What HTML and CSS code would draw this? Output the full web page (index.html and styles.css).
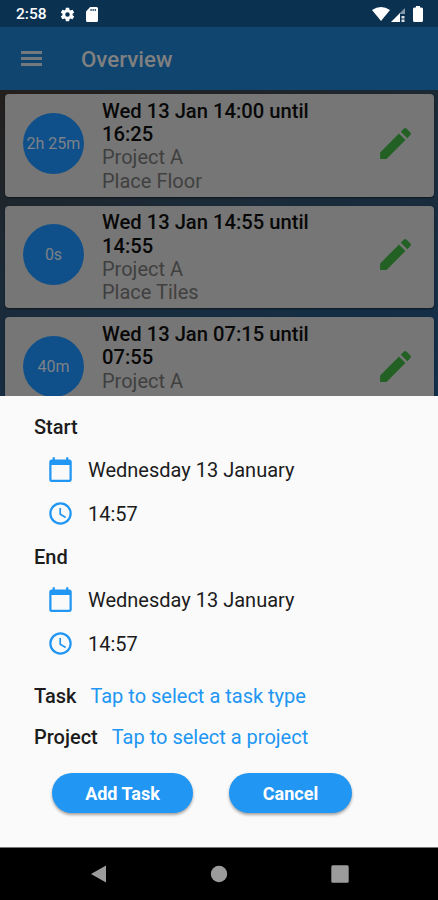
FILE: index.html
```
<!DOCTYPE html>
<html lang="en">
<head>
    <meta charset="UTF-8">
    <meta name="viewport" content="width=device-width, initial-scale=1.0">
    <title>Overview</title>
    <link rel="stylesheet" href="styles.css">
</head>
<body>

    <div class="status-bar">
        <span class="clock">2:58</span>
        <svg class="gear-icon" viewBox="0 0 24 24"><path d="M19.14 12.94c.04-.3.06-.61.06-.94 0-.32-.02-.64-.07-.94l2.03-1.58a.49.49 0 0 0 .12-.61l-1.92-3.32a.49.49 0 0 0-.59-.22l-2.39.96c-.5-.38-1.03-.7-1.62-.94l-.36-2.54a.48.48 0 0 0-.48-.41h-3.84c-.24 0-.43.17-.47.41l-.36 2.54c-.59.24-1.13.57-1.62.94l-2.39-.96a.48.48 0 0 0-.59.22L2.74 8.87c-.12.21-.08.47.12.61l2.03 1.58c-.05.3-.09.63-.09.94s.02.64.07.94l-2.03 1.58a.49.49 0 0 0-.12.61l1.92 3.32c.12.22.37.29.59.22l2.39-.96c.5.38 1.03.7 1.62.94l.36 2.54c.05.24.24.41.48.41h3.84c.24 0 .44-.17.47-.41l.36-2.54c.59-.24 1.13-.56 1.62-.94l2.39.96c.22.08.47 0 .59-.22l1.92-3.32a.48.48 0 0 0-.12-.61zM12 15.2A3.200 3.200 0 1 1 12 8.800a3.200 3.200 0 0 1 0 6.400z"/></svg>
        <svg class="sd-icon" viewBox="0 0 12 15"><path fill-rule="evenodd" d="M4.2 0H10.500a1.500 1.500 0 0 1 1.500 1.500V13.500a1.500 1.500 0 0 1-1.500 1.500H1.500A1.500 1.500 0 0 1 0 13.500V4.500zM4.500 2V4h1.100V2zM6.600 2V4h1.100V2zM8.700 2V4h1.100V2z"/></svg>
        <div class="status-right">
            <svg class="wifi-icon" viewBox="0 0 18 14"><path d="M0 3Q9-3 18 3L9 14z"/></svg>
            <svg class="signal-icon" viewBox="0 0 14 14"><path opacity=".5" d="M8 6L14 0V6z"/><path d="M0 14L9 5V14z"/><path d="M10.500 8h3v2.500h-3zM10.500 11.500h3V14h-3z" opacity=".85"/></svg>
            <svg class="battery-icon" viewBox="0 0 10 16"><path d="M3 0h4v1.500h1.500A1.500 1.500 0 0 1 10 3V14.500A1.500 1.500 0 0 1 8.500 16h-7A1.500 1.500 0 0 1 0 14.500V3a1.500 1.500 0 0 1 1.500-1.500H3z"/></svg>
        </div>
    </div>

    <div class="app-bar">
        <div class="menu-icon"><span></span><span></span><span></span></div>
        <h1>Overview</h1>
    </div>

    <div class="task-list">
        <div class="card">
            <div class="duration">2h 25m</div>
            <div class="card-text">
                <b>Wed 13 Jan 14:00 until<br>16:25</b>
                <span>Project A</span>
                <span>Place Floor</span>
            </div>
            <svg class="edit-icon" viewBox="0 0 24 24"><path d="M3 17.250V21h3.750L17.810 9.940l-3.750-3.750zM20.710 7.040a1 1 0 0 0 0-1.410l-2.340-2.340a1 1 0 0 0-1.410 0l-1.830 1.830 3.750 3.750z"/></svg>
        </div>
        <div class="card">
            <div class="duration">0s</div>
            <div class="card-text">
                <b>Wed 13 Jan 14:55 until<br>14:55</b>
                <span>Project A</span>
                <span>Place Tiles</span>
            </div>
            <svg class="edit-icon" viewBox="0 0 24 24"><path d="M3 17.250V21h3.750L17.810 9.940l-3.750-3.750zM20.710 7.040a1 1 0 0 0 0-1.410l-2.340-2.340a1 1 0 0 0-1.410 0l-1.830 1.830 3.750 3.750z"/></svg>
        </div>
        <div class="card">
            <div class="duration">40m</div>
            <div class="card-text">
                <b>Wed 13 Jan 07:15 until<br>07:55</b>
                <span>Project A</span>
            </div>
            <svg class="edit-icon" viewBox="0 0 24 24"><path d="M3 17.250V21h3.750L17.810 9.940l-3.750-3.750zM20.710 7.040a1 1 0 0 0 0-1.410l-2.340-2.340a1 1 0 0 0-1.410 0l-1.830 1.830 3.750 3.750z"/></svg>
        </div>
    </div>

    <div class="sheet">
        <h2>Start</h2>
        <div class="field">
            <svg viewBox="0 0 24 24"><path d="M20 3h-1V1h-2v2H7V1H5v2H4c-1.100 0-2 .9-2 2v16c0 1.100.9 2 2 2h16c1.100 0 2-.9 2-2V5c0-1.100-.9-2-2-2zm0 18H4V8h16z"/></svg>
            <span>Wednesday 13 January</span>
        </div>
        <div class="field">
            <svg viewBox="0 0 24 24"><path d="M11.990 2C6.470 2 2 6.480 2 12s4.470 10 9.990 10C17.520 22 22 17.520 22 12S17.520 2 11.990 2zM12 20a8 8 0 1 1 0-16 8 8 0 0 1 0 16zm.5-13H11v6l5.250 3.150.75-1.230-4.500-2.670z"/></svg>
            <span>14:57</span>
        </div>
        <h2>End</h2>
        <div class="field">
            <svg viewBox="0 0 24 24"><path d="M20 3h-1V1h-2v2H7V1H5v2H4c-1.100 0-2 .9-2 2v16c0 1.100.9 2 2 2h16c1.100 0 2-.9 2-2V5c0-1.100-.9-2-2-2zm0 18H4V8h16z"/></svg>
            <span>Wednesday 13 January</span>
        </div>
        <div class="field">
            <svg viewBox="0 0 24 24"><path d="M11.990 2C6.470 2 2 6.480 2 12s4.470 10 9.990 10C17.520 22 22 17.520 22 12S17.520 2 11.990 2zM12 20a8 8 0 1 1 0-16 8 8 0 0 1 0 16zm.5-13H11v6l5.250 3.150.75-1.230-4.500-2.670z"/></svg>
            <span>14:57</span>
        </div>
        <div class="select-row task-row">
            <b>Task</b>
            <a>Tap to select a task type</a>
        </div>
        <div class="select-row">
            <b>Project</b>
            <a>Tap to select a project</a>
        </div>
        <div class="buttons">
            <button class="add">Add Task</button>
            <button class="cancel">Cancel</button>
        </div>
    </div>

    <div class="nav-bar">
        <svg viewBox="0 0 18 18"><path d="M16 .5V17.500L1 9z"/></svg>
        <svg viewBox="0 0 18 18"><circle cx="9" cy="9" r="8.200"/></svg>
        <svg viewBox="0 0 18 18"><rect x=".3" y=".3" width="17.400" height="17.400" rx="1.500"/></svg>
    </div>

</body>
</html>
```
FILE: styles.css
```
* {
    box-sizing: border-box;
}

body {
    margin: 0;
    height: 900px;
    display: flex;
    flex-direction: column;
    overflow: hidden;
    font-family: Roboto, sans-serif;
    background-color: #000;
}

h1, h2 {
    margin: 0;
    font-weight: 500;
}

.status-bar {
    height: 27px;
    flex-shrink: 0;
    display: flex;
    align-items: center;
    padding: 1px 15px 0 16px;
    background-color: #0b3151;
    color: #fff;
}

.status-bar svg {
    fill: #fff;
}

.clock {
    font-size: 15.5px;
    font-weight: 500;
    width: 43px;
}

.gear-icon {
    width: 17px;
    height: 17px;
    margin-right: 10px;
}

.sd-icon {
    width: 12px;
    height: 15px;
}

.status-right {
    margin-left: auto;
    display: flex;
    align-items: center;
}

.wifi-icon {
    width: 18px;
    height: 14px;
    margin-right: 1px;
}

.signal-icon {
    width: 14px;
    height: 14px;
    margin: 1px 8px 0 0;
}

.battery-icon {
    width: 10px;
    height: 16px;
}

/* Everything behind the sheet is dimmed */
.app-bar {
    height: 63px;
    flex-shrink: 0;
    display: flex;
    align-items: center;
    padding-left: 21px;
    background-color: #10456f;
    color: #808080;
}

.menu-icon {
    width: 21px;
    margin-right: 39px;
    display: flex;
    flex-direction: column;
    gap: 3px;
}

.menu-icon span {
    height: 3px;
    background-color: #74797d;
}

.app-bar h1 {
    font-size: 22.300px;
}

.task-list {
    height: 306px;
    flex-shrink: 0;
    overflow: hidden;
    padding: 4px 4px 0 5px;
    display: flex;
    flex-direction: column;
    gap: 9px;
    background: linear-gradient(160deg, #241f1d 0%, #1b2b38 40%, #12304d 100%);
}

.card {
    height: 102.600px;
    flex-shrink: 0;
    display: flex;
    padding: 5.600px 18px 0;
    border-radius: 4px;
    background-color: #767676;
    box-shadow: 0 1px 2px rgba(0, 0, 0, 0.5);
}

.duration {
    width: 61px;
    height: 61px;
    margin: 13px 18px 0 0;
    border-radius: 50%;
    background-color: #10508a;
    color: #7d8287;
    font-size: 16px;
    line-height: 61px;
    text-align: center;
    white-space: nowrap;
}

.card-text {
    flex: 1;
    display: flex;
    flex-direction: column;
    font-size: 20px;
    line-height: 23.400px;
    color: #404040;
}

.card-text b {
    font-size: 20.200px;
    font-weight: 500;
    color: #080808;
}

.edit-icon {
    width: 41px;
    height: 41px;
    margin-top: 23px;
    fill: #226024;
}

.sheet {
    height: 451px;
    flex-shrink: 0;
    padding: 19px 34px 0;
    background-color: #fafafa;
    color: #1c1c1c;
    font-size: 20px;
}

.sheet h2 {
    height: 33px;
    font-size: 20px;
    line-height: 24px;
}

.field {
    height: 44px;
    display: flex;
    align-items: center;
    padding-left: 13px;
}

.field:nth-of-type(2) {
    margin-bottom: 9px;
}

.field svg {
    width: 27px;
    height: 27px;
    margin: -1px 14px 0 0;
    fill: #2196f3;
}

.select-row {
    height: 41px;
    display: flex;
    align-items: center;
}

.task-row {
    margin-top: 9px;
}

.select-row b {
    margin-right: 14px;
    font-weight: 500;
}

.select-row a {
    color: #2196f3;
}

.buttons {
    display: flex;
    gap: 36px;
    padding: 16px 0 0 18px;
}

.buttons button {
    height: 40px;
    padding: 0;
    border: none;
    border-radius: 20px;
    background-color: #2196f3;
    color: #fff;
    font-family: inherit;
    font-size: 18px;
    font-weight: 700;
    box-shadow: 0 2px 3px rgba(0, 0, 0, 0.35);
}

.buttons .add {
    width: 141px;
}

.buttons .cancel {
    width: 123px;
}

.nav-bar {
    flex: 1;
    display: flex;
    align-items: center;
    justify-content: center;
    gap: 102.500px;
    border-top: 1px solid #777;
    background-color: #000;
}

.nav-bar svg {
    width: 18px;
    height: 18px;
    fill: #9c9c9c;
}
```
